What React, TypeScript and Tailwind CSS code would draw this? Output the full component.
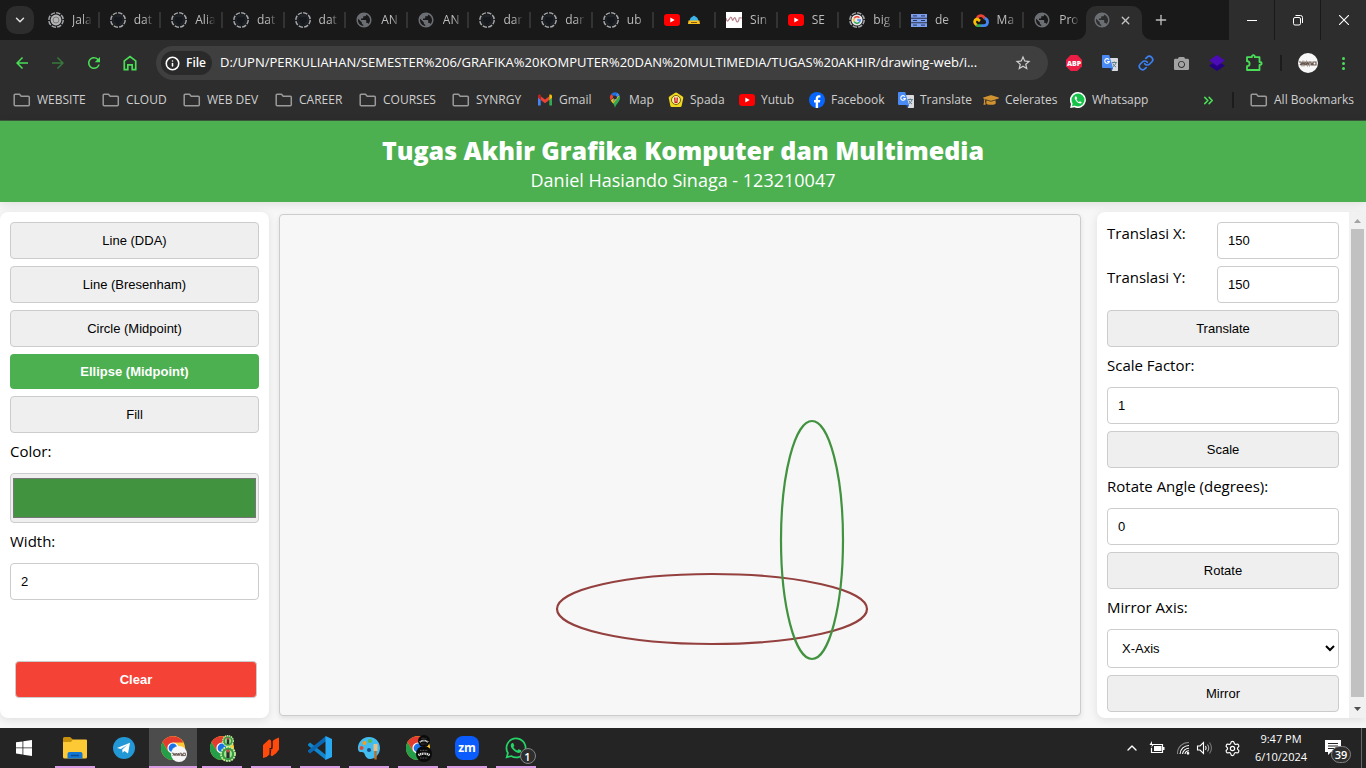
import React from "react";
import { MdArrowBack, MdArrowForward, MdRefresh, MdStarOutline, MdPublic } from "react-icons/md";
import { FaCamera, FaGraduationCap, FaWhatsapp } from "react-icons/fa";
import { ChevronDown, ChevronUp, ChevronsRight, Plus, X, Info, Settings, Link } from "lucide-react";

const fontUi = "font-['Open_Sans','Noto_Sans',sans-serif]";
const fontControl = "font-['Liberation_Sans',Arial,sans-serif]";

/* ---------- small drawings ---------- */

function DashedIcon({ children }: { children?: React.ReactNode }) {
  return (
    <svg viewBox="0 0 16 16" className="size-4 shrink-0">
      {children ?? (
        <>
          <circle cx="8" cy="8" r="5.8" fill="#1f2328" />
          <path d="M6.4 13v-2c-1.6-.5-2.6-1.4-2.6-3.2l.6-1.7.1-1.6 1.7.8h3.6l1.7-.8.1 1.6.6 1.7c0 1.8-1 2.7-2.6 3.2v2z" fill="#15181c" />
        </>
      )}
      <circle cx="8" cy="8" r="7.2" fill="none" stroke="#a4a7ab" strokeWidth="1.5" strokeDasharray="4.4 1.25" />
    </svg>
  );
}

function Globe() {
  return <MdPublic className="-ml-px size-[18px] shrink-0 text-[#6b6f74]" />;
}

function YouTube() {
  return (
    <svg viewBox="0 0 16 12" className="h-3 w-4 shrink-0">
      <rect width="16" height="12" rx="3" fill="#f00" />
      <path d="M6.3 3.4v5.2L10.7 6z" fill="#fff" />
    </svg>
  );
}

function GoogleG() {
  return (
    <>
      <circle cx="8" cy="8" r="5.6" fill="#e8e8e8" />
      <path d="M10.4 5.8A3.3 3.3 0 0 0 5.2 6.3" stroke="#ea4335" strokeWidth="1.5" fill="none" />
      <path d="M5.2 6.3a3.3 3.3 0 0 0 0 3.4" stroke="#fbbc05" strokeWidth="1.5" fill="none" />
      <path d="M5.2 9.7a3.3 3.3 0 0 0 5 .7" stroke="#34a853" strokeWidth="1.5" fill="none" />
      <path d="M10.2 10.4A3.3 3.3 0 0 0 11.2 8H8.2" stroke="#4285f4" strokeWidth="1.5" fill="none" />
    </>
  );
}

function Translate() {
  return (
    <svg viewBox="0 0 16 16" className="size-4 shrink-0">
      <path d="M6 3h9.2a.8.8 0 0 1 .8.8V15.2a.8.8 0 0 1-.8.8H10z" fill="#dadce0" />
      <path d="M9.8 7.5h5M12.3 6.5v1M14 7.6c-.5 2-1.7 3.2-3.2 4.2M10.8 8.6c.6 1.5 1.9 2.6 3.2 3.4" stroke="#607d8b" strokeWidth="1" fill="none" />
      <path d="M8 12.8h3L9.8 16z" fill="#1a56c4" />
      <path d="M.8 0H7.2L11 12.9H.8a.8.8 0 0 1-.8-.8V.8A.8.8 0 0 1 .8 0z" fill="#4a8af4" />
      <path d="M7 4.7A2.3 2.3 0 1 0 7.3 6.5H5.2" stroke="#fff" strokeWidth="1.1" fill="none" />
    </svg>
  );
}

function Gmail() {
  return (
    <svg viewBox="0 0 16 12" className="h-3 w-4 shrink-0">
      <path d="M1 2v9.500h2.700V5z" fill="#4285f4" />
      <path d="M15 2v9.500h-2.700V5z" fill="#34a853" />
      <path d="M3.7 2.2 8 5.5l4.3-3.3v3.7L8 9.2 3.7 5.9z" fill="#ea4335" />
      <path d="M1 2.1C1 .6 2.7-.1 3.7.8v5.1L1 3.8z" fill="#c5221f" />
      <path d="M15 2.1c0-1.500-1.700-2.200-2.700-1.300v5.1L15 3.8z" fill="#fbbc04" />
    </svg>
  );
}

function MapPin() {
  return (
    <svg viewBox="0 0 16 16" className="size-4 shrink-0">
      <path d="M4 8.600C5 10.800 7.300 11.600 8 16c.7-4.400 5-5.600 5-10.500 0-1-.3-1.900-.7-2.600z" fill="#34a853" />
      <path d="M3.700 8.200c.8 1.500 1.700 2.100 2.500 3.300L12.300 4 9 4z" fill="#fbbc04" />
      <path d="M4.300 2.100A5.200 5.200 0 0 0 3.700 8.300l3-3.600z" fill="#ea4335" />
      <path d="M8 .2c-1.500 0-2.800.7-3.700 1.900l3 2.500L10 .7C9.400.4 8.700.2 8 .2z" fill="#1a73e8" />
      <path d="M10 .7c1 .4 1.900 1.200 2.400 2.300L6 10.200l1-5z" fill="#4285f4" />
      <circle cx="8" cy="5.3" r="1.900" fill="#2d2d2d" />
    </svg>
  );
}

function Spada() {
  return (
    <svg viewBox="0 0 16 16" className="size-4 shrink-0">
      <path d="M8 2 13.800 5.800 12.200 13.500H3.800L2.200 5.800z" fill="#efd91c" stroke="#efd91c" strokeWidth="3" strokeLinejoin="round" />
      <circle cx="8" cy="8" r="4.500" fill="#fff3a0" stroke="#7b5b13" />
      <path d="M6 5.500h4L9.500 11h-3z" fill="#c51f1f" />
      <path d="M8 4.500v5" stroke="#fff" strokeWidth=".8" />
    </svg>
  );
}

function Facebook() {
  return (
    <svg viewBox="0 0 16 16" className="size-4 shrink-0">
      <circle cx="8" cy="8" r="8" fill="#0866ff" />
      <path d="M6.700 16v-5.500H5V8h1.700V6.900c0-2.500 1.200-3.700 3.300-3.700.5 0 1 .1 1.400.2v2.200h-1c-1 0-1.300.5-1.300 1.300V8h2.200l-.4 2.500H9.100V16z" fill="#fff" />
    </svg>
  );
}

function WhatsAppRound() {
  return (
    <svg viewBox="0 0 16 16" className="size-4 shrink-0">
      <path d="M8 0a8 8 0 1 1-3.600 15.200L.2 16l.8-4A8 8 0 0 1 8 0z" fill="#fff" />
      <circle cx="8" cy="8" r="6.500" fill="#16c24a" />
      <path d="M2 14.200 3 10l3 3.200z" fill="#16c24a" />
      <path d="M5.600 4.200c-1.600 1-1 3 .8 5s4.400 3.200 5.400 1.400L10 9.200l-1 .8C8 9.600 7 8.600 6.400 7.400l.8-1-.8-2z" fill="#fff" />
    </svg>
  );
}

function Folder() {
  return (
    <svg viewBox="0 0 18 14" className="h-3.5 w-[18px] shrink-0" fill="none" stroke="#9a9a9a" strokeWidth="1.5" strokeLinejoin="round">
      <path d="M2.200 1.200H6.500L8.200 3.200H15.300a1 1 0 0 1 1 1V11.700a1 1 0 0 1-1 1H2.200a1 1 0 0 1-1-1V2.200a1 1 0 0 1 1-1z" />
    </svg>
  );
}

function Servers() {
  return (
    <svg viewBox="0 0 16 13" className="h-[13px] w-4 shrink-0">
      {[0, 4.6, 9.2].map((y) => (
        <g key={y}>
          <rect y={y} width="16" height="3.8" fill="#7d9ff0" />
          <path d={`M2 ${y + 1.9}h4M10 ${y + 1.9}h4`} stroke="#26355f" strokeWidth="1" />
        </g>
      ))}
    </svg>
  );
}

function Cloud() {
  return (
    <svg viewBox="0 0 16 13" className="h-[13px] w-4 shrink-0" fill="none" strokeWidth="2.8">
      <path d="M4 4.800C5 1.300 9.500.2 11.800 4.500" stroke="#ea4335" />
      <path d="M11.600 4.300c4 .8 4 7.300-.6 7.300H8" stroke="#4285f4" />
      <path d="M8 11.600H4.300L3.300 11" stroke="#34a853" />
      <path d="M3.600 11C.8 9.500.9 5.500 4.500 5.200L7 7" stroke="#fbbc05" />
    </svg>
  );
}

function Signature() {
  return (
    <svg viewBox="0 0 16 16" className="size-4 shrink-0">
      <rect width="16" height="16" fill="#fff" />
      <path d="M0 6c1 5 2 3 4 0s2 4 3 2 2-4 3 0 3 1 3-1 1-1 3-1" stroke="#b9838d" strokeWidth="1.2" fill="none" />
    </svg>
  );
}

function Taxi() {
  return (
    <svg viewBox="0 0 12 10" className="h-2.5 w-3 shrink-0">
      <path d="M2.500 3 6 .5 9.500 3 10.500 6h-9z" fill="#3db4e7" />
      <path d="M.5 5.500h11l.5 3.500H0z" fill="#fcc21b" />
      <path d="M3 7.500h6" stroke="#8a5a13" />
    </svg>
  );
}

function Puzzle() {
  return (
    <svg viewBox="0 0 18 18" className="size-[18px] shrink-0" fill="none" stroke="#4ade57" strokeWidth="1.8" strokeLinejoin="round">
      <path d="M2 3.200H6.800Q6.800 1.200 8.300 1.200T9.800 3.200H14.500V8Q16.600 8 16.600 9.500T14.500 11V16H2V12.200Q4.600 12 4.600 9.700T2 7.200z" />
    </svg>
  );
}

function ChromeLogo({ className }: { className: string }) {
  return (
    <svg viewBox="0 0 24 24" className={className}>
      <circle cx="12" cy="12" r="12" fill="#fcc934" />
      <path d="M1.600 6 7 15 12 17.500 17 15 12 24A12 12 0 0 1 1.600 6z" fill="#259e4a" />
      <path d="M1.600 6A12 12 0 0 1 22.500 6.500H12L7 15z" fill="#e33b2e" />
      <circle cx="12" cy="12" r="5.600" fill="#fff" />
      <circle cx="12" cy="12" r="4.400" fill="#1a73e8" />
    </svg>
  );
}

function AvatarNando({ className }: { className: string }) {
  return (
    <svg viewBox="0 0 20 20" className={className}>
      <circle cx="10" cy="10" r="10" fill="#f7f7f7" />
      <path d="M1 9h2l1 3 1-3 1 3 1-3 2 3V9l2 3V9h2v3h2V9h3v3h-3M2 12l2-2m3 2 3-2m3 2 2-2" stroke="#67574f" strokeWidth="1.2" fill="none" />
    </svg>
  );
}

function AvatarGreen({ className }: { className: string }) {
  return (
    <svg viewBox="0 0 20 20" className={className}>
      <circle cx="10" cy="10" r="8.800" fill="#3a9b45" stroke="#c5ef9c" strokeWidth="2.2" strokeDasharray="2.5 1" />
      <circle cx="10" cy="10" r="5" fill="#9fe88f" />
      <path d="M8 6h4v9H8z" fill="#2b2f2b" />
      <circle cx="10" cy="6" r="2" fill="#d2414b" />
    </svg>
  );
}

function AvatarBlack({ className }: { className: string }) {
  return (
    <svg viewBox="0 0 20 20" className={className}>
      <circle cx="10" cy="10" r="10" fill="#0a0a0a" />
      <path d="M3 11.500q7-4 14 0" stroke="#e4e4e4" strokeWidth="3" strokeDasharray="1.5 .7" fill="none" />
      <path d="M5 15h10M5 5.500h10" stroke="#888" strokeWidth="1" strokeDasharray="1 1" />
    </svg>
  );
}

/* ---------- browser frame ---------- */

const tabs: { icon: React.ReactNode; text: React.ReactNode }[] = [
  {
    icon: (
      <DashedIcon>
        <circle cx="8" cy="8" r="5.4" fill="#b5b5b5" />
        <circle cx="8" cy="8" r="3" fill="none" stroke="#777" />
      </DashedIcon>
    ),
    text: "Jala",
  },
  { icon: <DashedIcon />, text: "dat" },
  { icon: <DashedIcon />, text: "Alia" },
  { icon: <DashedIcon />, text: "dat" },
  { icon: <DashedIcon />, text: "dat" },
  { icon: <Globe />, text: "AN" },
  { icon: <Globe />, text: "AN" },
  { icon: <DashedIcon />, text: "dar" },
  { icon: <DashedIcon />, text: "dar" },
  { icon: <DashedIcon />, text: "ub" },
  { icon: <YouTube />, text: <Taxi /> },
  { icon: <Signature />, text: "Sin" },
  { icon: <YouTube />, text: "SE" },
  { icon: <DashedIcon><GoogleG /></DashedIcon>, text: "big" },
  { icon: <Servers />, text: "de" },
  { icon: <Cloud />, text: "Ma" },
  { icon: <Globe />, text: "Pro" },
];

function TabStrip() {
  return (
    <div className="flex h-10 bg-[#191919]">
      <button aria-label="Search tabs" className="my-1.5 ml-1.5 flex size-7 shrink-0 items-center justify-center rounded-[10px] bg-[#2d2d2d] text-[#e0e0e0]">
        <ChevronDown size={14} strokeWidth={2.5} />
      </button>
      <div className="ml-1 flex min-w-0 flex-1">
        {tabs.map((tab, i) => (
          <div key={i} className="flex min-w-0 flex-1 items-center">
            <div className="flex min-w-0 flex-1 items-center gap-2 pl-2.5">
              {tab.icon}
              <span className="flex h-[18px] w-6 items-center whitespace-nowrap text-[12px] leading-[18px] text-[#bdbdbd] [mask-image:linear-gradient(to_right,black_45%,transparent_85%)]">
                {tab.text}
              </span>
            </div>
            {i < tabs.length - 1 && <span className="h-4 w-0.5 shrink-0 bg-[#333333]" />}
          </div>
        ))}
      </div>
      <div className="relative mt-1.5 flex w-14 shrink-0 items-center justify-between rounded-t-[10px] bg-[#2d2d2d] pr-2.5 pb-1.5 pl-2">
        <svg viewBox="0 0 10 10" className="absolute bottom-0 -left-2.5 size-2.5"><path d="M10 0A10 10 0 0 1 0 10H10z" fill="#2d2d2d" /></svg>
        <svg viewBox="0 0 10 10" className="absolute -right-2.5 bottom-0 size-2.5"><path d="M0 0A10 10 0 0 0 10 10H0z" fill="#2d2d2d" /></svg>
        <Globe />
        <button aria-label="Close tab"><X size={13} strokeWidth={2.5} className="text-[#c4c4c4]" /></button>
      </div>
      <div className="flex w-[87px] shrink-0 items-center pl-[11px]">
        <button aria-label="New tab"><Plus size={16} strokeWidth={2} className="text-[#bdbdbd]" /></button>
      </div>
      <div className="flex shrink-0 gap-px text-white">
        <button aria-label="Minimize" className="flex w-[45px] items-center justify-center bg-[#2d2d2d]"><svg viewBox="0 0 10 10" className="size-2.5"><path d="M0 5.500h10" stroke="#fff" /></svg></button>
        <button aria-label="Restore" className="flex w-[45px] items-center justify-center bg-[#2d2d2d]">
          <svg viewBox="0 0 12 12" className="size-3" fill="none" stroke="#fff"><rect x="1.5" y="3.5" width="7" height="7.500" rx="1.500" /><path d="M3.500 1.500h5a2 2 0 0 1 2 2v5.500" /></svg>
        </button>
        <button aria-label="Close" className="flex w-[45px] items-center justify-center bg-[#2d2d2d]"><svg viewBox="0 0 10 10" className="size-2.5"><path d="M0 0 10 10M10 0 0 10" stroke="#fff" strokeWidth="1.1" /></svg></button>
      </div>
    </div>
  );
}

function Toolbar() {
  return (
    <div className="flex h-[46px] items-center bg-[#2d2d2d]">
      <div className="flex w-[156px] shrink-0 items-center gap-[18px] pl-[13px] text-[#4ade57]">
        <button aria-label="Back"><MdArrowBack size={18} /></button>
        <button aria-label="Forward" className="text-[#37773b]"><MdArrowForward size={18} /></button>
        <button aria-label="Reload"><MdRefresh size={18} /></button>
        <button aria-label="Home">
          <svg viewBox="0 0 18 18" className="size-[18px]" fill="none" stroke="currentColor" strokeWidth="1.7"><path d="M3.300 15.700V6.900L9 2.600l5.700 4.300v8.800h-3.500v-4.900H6.800v4.900z" /></svg>
        </button>
      </div>
      <div className="flex h-[34px] min-w-0 flex-1 items-center rounded-full bg-[#3f3f3f] pr-4 pl-[5px]">
        <div className="flex h-6 w-[51px] shrink-0 items-center gap-1.5 rounded-full bg-[#2a2a2a] pl-1 text-[12px] font-semibold text-white">
          <Info size={15} strokeWidth={2.5} className="shrink-0" />
          File
        </div>
        <input
          aria-label="Address"
          readOnly
          className="ml-2 min-w-0 flex-1 bg-transparent text-[13px] text-white outline-none"
          value="D:/UPN/PERKULIAHAN/SEMESTER%206/GRAFIKA%20KOMPUTER%20DAN%20MULTIMEDIA/TUGAS%20AKHIR/drawing-web/i..."
        />
        <button aria-label="Bookmark this page"><MdStarOutline size={18} className="text-[#cfcfcf]" /></button>
      </div>
      <div className="flex w-[216px] shrink-0 items-center gap-5 pl-[18px]">
        <svg viewBox="0 0 16 16" className="size-4 shrink-0">
          <path d="M4.700 0h6.600L16 4.700v6.600L11.300 16H4.700L0 11.300V4.700z" fill="#ed1e45" />
          <text x="8" y="10.6" textAnchor="middle" fontSize="7" fontWeight="800" fill="#fff">ABP</text>
        </svg>
        <Translate />
        <Link size={16} strokeWidth={2.5} className="shrink-0 text-[#3b82f6]" />
        <FaCamera size={15} className="shrink-0 text-[#a3a3a3]" />
        <svg viewBox="0 0 16 16" className="size-4 shrink-0"><path d="M0 10.500 8 6l8 4.500L8 16z" fill="#250080" /><path d="M0 5.500 8 0l8 5.500L8 11z" fill="#4b0bb5" /></svg>
        <Puzzle />
      </div>
      <div className="flex w-[102px] shrink-0 items-center pl-4">
        <span className="h-4 w-0.5 bg-[#1c1c1c]" />
        <AvatarNando className="ml-4 size-5" />
        <button aria-label="Menu" className="ml-6 flex flex-col gap-0.5">
          <span className="size-[3px] rounded-full bg-[#4ade57]" /><span className="size-[3px] rounded-full bg-[#4ade57]" /><span className="size-[3px] rounded-full bg-[#4ade57]" />
        </button>
      </div>
    </div>
  );
}

const bookmarks: { icon: React.ReactNode; text: string; width: string }[] = [
  { icon: <Folder />, text: "WEBSITE", width: "w-[89px]" },
  { icon: <Folder />, text: "CLOUD", width: "w-[81px]" },
  { icon: <Folder />, text: "WEB DEV", width: "w-[92px]" },
  { icon: <Folder />, text: "CAREER", width: "w-[84px]" },
  { icon: <Folder />, text: "COURSES", width: "w-[93px]" },
  { icon: <Folder />, text: "SYNRGY", width: "w-[85px]" },
  { icon: <Gmail />, text: "Gmail", width: "w-[70px]" },
  { icon: <MapPin />, text: "Map", width: "w-[61px]" },
  { icon: <Spada />, text: "Spada", width: "w-[71px]" },
  { icon: <YouTube />, text: "Yutub", width: "w-[70px]" },
  { icon: <Facebook />, text: "Facebook", width: "w-[89px]" },
  { icon: <Translate />, text: "Translate", width: "w-[85px]" },
  { icon: <FaGraduationCap size={16} className="shrink-0 text-[#d1932f]" />, text: "Celerates", width: "w-[87px]" },
  { icon: <WhatsAppRound />, text: "Whatsapp", width: "w-[88px]" },
];

function BookmarkBar() {
  return (
    <div className="flex h-[35px] items-center border-b border-[#3c5a3d] bg-[#2d2d2d] pb-1.5 pl-[13px] text-[12px] leading-4 text-[#cfcfcf]">
      {bookmarks.map((b) => (
        <a key={b.text} href="#" className={`flex shrink-0 items-center gap-1.5 whitespace-nowrap ${b.width}`}>
          {b.icon}
          {b.text}
        </a>
      ))}
      <div className="ml-auto flex items-center pr-3">
        <ChevronsRight size={15} strokeWidth={2.5} className="text-[#4ade57]" />
        <span className="ml-4 h-4 w-0.5 bg-[#1c1c1c]" />
        <a href="#" className="ml-4 flex items-center gap-1.5 whitespace-nowrap"><Folder />All Bookmarks</a>
      </div>
    </div>
  );
}

/* ---------- page ---------- */

const field = `w-full rounded-[4px] border border-[#cccccc] text-[13px] text-black ${fontControl}`;
const button = `${field} h-[37px] bg-[#efefef]`;
const input = `${field} h-[37px] bg-white px-2.5`;
const label = "block h-[26px] text-[15px] leading-[22px] text-black";

function ToolPanel() {
  return (
    <section className="flex w-[269px] shrink-0 flex-col gap-[7px] rounded-lg bg-white p-2.5 shadow-[0_2px_10px_rgba(0,0,0,0.1)]">
      <button className={button}>Line (DDA)</button>
      <button className={button}>Line (Bresenham)</button>
      <button className={button}>Circle (Midpoint)</button>
      <button className={`h-[35px] w-full rounded-[4px] bg-[#4caf50] text-[13px] font-bold text-white ${fontControl}`}>Ellipse (Midpoint)</button>
      <button className={button}>Fill</button>
      <label htmlFor="color" className={label}>Color:</label>
      <input id="color" type="color" defaultValue="#41933f" className="h-[50px] w-full rounded-[4px] border border-[#cccccc] bg-[#efefef] p-0" />
      <label htmlFor="width" className={label}>Width:</label>
      <input id="width" type="number" defaultValue={2} className={input} />
      <div className="mt-auto pr-0.5 pb-2.5 pl-[5px]">
        <button className={`h-[37px] w-full rounded-[4px] border border-[#cccccc] bg-[#f44336] text-[13px] font-bold text-white ${fontControl}`}>Clear</button>
      </div>
    </section>
  );
}

function DrawingArea() {
  return (
    <section className="my-0.5 mr-4 ml-2.5 flex min-w-0 flex-1 rounded-[4px] border border-[#cccccc] bg-[#f7f7f7] shadow-[0_2px_5px_rgba(0,0,0,0.1)]">
      <svg viewBox="0 0 800 500" className="w-full" role="img" aria-label="Drawing" fill="none" strokeWidth="2.2">
        <ellipse cx="432" cy="394" rx="155" ry="35" stroke="#93403f" />
        <ellipse cx="532" cy="325" rx="31" ry="119" stroke="#41933f" />
      </svg>
    </section>
  );
}

function TransformPanel() {
  return (
    <section className="flex w-[269px] shrink-0 overflow-hidden rounded-l-lg bg-white shadow-[0_2px_10px_rgba(0,0,0,0.1)]">
      <div className="flex min-w-0 flex-1 flex-col gap-[7px] p-2.5 pb-1.5">
        <div className="flex justify-between">
          <label htmlFor="tx" className={label}>Translasi X:</label>
          <div className="w-[122px]"><input id="tx" type="number" defaultValue={150} className={input} /></div>
        </div>
        <div className="flex justify-between">
          <label htmlFor="ty" className={label}>Translasi Y:</label>
          <div className="w-[122px]"><input id="ty" type="number" defaultValue={150} className={input} /></div>
        </div>
        <button className={button}>Translate</button>
        <label htmlFor="scale" className={label}>Scale Factor:</label>
        <input id="scale" type="number" defaultValue={1} className={input} />
        <button className={button}>Scale</button>
        <label htmlFor="angle" className={label}>Rotate Angle (degrees):</label>
        <input id="angle" type="number" defaultValue={0} className={input} />
        <button className={button}>Rotate</button>
        <label htmlFor="axis" className={label}>Mirror Axis:</label>
        <select id="axis" className={`${field} h-[39px] bg-white px-2.5`}>
          <option>X-Axis</option>
          <option>Y-Axis</option>
        </select>
        <button className={button}>Mirror</button>
      </div>
      <div aria-hidden="true" className="flex w-[17px] flex-col items-center bg-[#f1f1f1]">
        <svg viewBox="0 0 17 17" className="size-[17px] shrink-0"><path d="M5 11h7L8.500 7z" fill="#a3a3a3" /></svg>
        <div className="w-[13px] flex-1 bg-[#c1c1c1]" />
        <svg viewBox="0 0 17 21" className="h-[21px] w-[17px] shrink-0"><path d="M5 10h7l-3.500 4z" fill="#505050" /></svg>
      </div>
    </section>
  );
}

/* ---------- taskbar ---------- */

const apps: { name: string; icon: React.ReactNode; open?: boolean; active?: boolean }[] = [
  {
    name: "File Explorer",
    open: true,
    icon: (
      <svg viewBox="0 0 24 22" className="h-[22px] w-6">
        <path d="M0 1.500Q0 0 1.500 0H7l3 2.500V6H0z" fill="#c9920c" />
        <path d="M0 5h8l2-2.500h13q1 0 1 1V20q0 1.500-1.500 1.500h-21Q0 21.500 0 20z" fill="#fdc935" />
        <path d="M4.500 21.500V17q0-2 2-2h11q2 0 2 2v4.500z" fill="#1377d1" />
        <path d="M8 18.500h8" stroke="#0b4b92" strokeWidth="1.5" />
      </svg>
    ),
  },
  {
    name: "Telegram",
    icon: (
      <svg viewBox="0 0 22 22" className="size-[22px]">
        <circle cx="11" cy="11" r="11" fill="#2398d6" />
        <path d="M4 11 17 5.700 15 16.500l-3.600-2.600-1.800 1.800-.4-3.200 5-4.600-6.300 4z" fill="#fff" />
      </svg>
    ),
  },
  { name: "Chrome profile 1", open: true, active: true, icon: <span className="relative flex size-6"><ChromeLogo className="size-6" /><AvatarNando className="absolute top-2.5 left-2.5 size-4" /></span> },
  { name: "Chrome profile 2", open: true, icon: <span className="relative flex size-6"><ChromeLogo className="size-6" /><AvatarGreen className="absolute -top-px left-3 size-3" /><AvatarGreen className="absolute top-2.5 left-2.5 size-4" /></span> },
  {
    name: "Nitro",
    open: true,
    icon: (
      <svg viewBox="0 0 18 24" className="h-6 w-[18px]">
        <path d="M1 9 7 3.500Q9.500 3 9.500 7V12H7.500v6.500Q5 21.500 1 22z" fill="#ff4a0c" />
        <path d="M17 1.500v12Q14.500 18 10.500 20 8 20.500 8 17v-4h2.500V5Q13 2.500 17 1.500z" fill="#ff4a0c" />
        <path d="M10 4v7L8.800 13.500 8 19.500" stroke="#2a1a14" strokeWidth="1" fill="none" />
      </svg>
    ),
  },
  {
    name: "Visual Studio Code",
    open: true,
    icon: (
      <svg viewBox="0 0 24 24" className="size-6">
        <path d="M0 8.200 2 6.500 18 19v5L0 9.500z" fill="#1186cf" />
        <path d="M0 15.800 2 17.500 18 5V0L0 14.500z" fill="#0b68b4" />
        <path d="M17.500 0 24 3v18l-6.500 3z" fill="#29a9f2" />
      </svg>
    ),
  },
  {
    name: "Paint",
    open: true,
    icon: (
      <svg viewBox="0 0 24 24" className="size-6">
        <path d="M12 1C4 1 .5 8 1 13c.4 4 4 3 5.500 3.500S8 23 13 23s10-4.500 10-11S18 1 12 1z" fill="#43bdf0" />
        <circle cx="4.500" cy="12" r="2" fill="#dd4931" /><circle cx="7.500" cy="7" r="2" fill="#f4a11b" /><circle cx="13" cy="5" r="2" fill="#55b94e" /><circle cx="12" cy="14" r="2" fill="#1a4c83" />
        <path d="M16.500 8h4v7h-4z" fill="#e8c087" /><path d="M17.300 15h2.400v8.500h-2.400z" fill="#b66e2a" />
      </svg>
    ),
  },
  { name: "Chrome profile 3", open: true, icon: <span className="relative flex size-6"><ChromeLogo className="size-6" /><AvatarBlack className="absolute -top-px left-3 size-3" /><AvatarBlack className="absolute top-2.5 left-2.5 size-4" /></span> },
  {
    name: "Zoom",
    open: true,
    icon: (
      <svg viewBox="0 0 24 24" className="size-6">
        <rect width="24" height="24" rx="8" fill="#0b5cff" />
        <text x="12" y="15.500" textAnchor="middle" fontSize="12" fontWeight="700" fill="#fff">zm</text>
      </svg>
    ),
  },
  {
    name: "WhatsApp",
    open: true,
    icon: (
      <span className="relative flex size-6">
        <FaWhatsapp className="size-6 text-[#25d366]" />
        <span className="absolute top-3 left-4 flex size-4 items-center justify-center rounded-full border border-[#858585] bg-[#2e2e2e] text-[11px] leading-none font-semibold text-white">1</span>
      </span>
    ),
  },
];

function Taskbar() {
  return (
    <footer className="flex h-10 bg-[#242424] text-white">
      <button aria-label="Start" className="mr-0.5 flex w-12 items-center justify-center">
        <svg viewBox="0 0 16 16" className="size-4" fill="#fff"><path d="M0 2.300 6.500 1.400v6.100H0zM7.300 1.300 16 0v7.500H7.300zM0 8.300h6.500v6.200L0 13.600zM7.300 8.300H16V16l-8.700-1.300z" /></svg>
      </button>
      {apps.map((app) => (
        <button key={app.name} aria-label={app.name} className="flex w-[49px] flex-col items-center">
          <span className={`flex h-[38px] items-center justify-center pt-0.5 ${app.active ? "w-12 bg-[#4c4c4c]" : "w-10"}`}>{app.icon}</span>
          {app.open && <span className={`h-0.5 bg-[#d99be4] ${app.active ? "w-12" : "w-10"}`} />}
        </button>
      ))}
      <div className="ml-auto flex items-center">
        <ChevronUp size={16} className="text-white" />
        <svg viewBox="0 0 18 16" className="ml-2 h-4 w-[18px]">
          <path d="M4 4.500h10.500v8H3.500V8" fill="none" stroke="#fff" strokeWidth="1.2" />
          <path d="M6 6h7.500v5H6z" fill="#fff" /><path d="M15 7h1.500v3H15z" fill="#fff" /><path d="M4 1 1.500 5H4L3 8l3-4H4z" fill="#fff" />
        </svg>
        <svg viewBox="0 0 14 14" className="ml-2.5 size-3.5" fill="none" stroke="#fff" strokeWidth="1.1">
          <path d="M1.500 13A11 11 0 0 1 13 1.500" stroke="#8a8a8a" /><path d="M4 13A9 9 0 0 1 13 4.500" /><path d="M6.500 13A6.500 6.500 0 0 1 13 7.300" /><path d="M9 13a4 4 0 0 1 4-3.300" /><circle cx="12" cy="12.300" r=".8" fill="#fff" />
        </svg>
        <svg viewBox="0 0 18 16" className="ml-1.5 h-4 w-[18px]" fill="none" stroke="#fff" strokeWidth="1.1">
          <path d="M1.500 6H4l3.500-3.500v11L4 10H1.500z" /><path d="M9.500 6q1.300 2 0 4" /><path d="M11.500 4.500q2.500 3.500 0 7" stroke="#aaa" /><path d="M13.500 2.500q4 5.500 0 11" stroke="#777" />
        </svg>
        <Settings size={17} strokeWidth={1.7} className="ml-2.5" />
        <div className="ml-1 flex w-[72px] flex-col items-center text-[11px] leading-[18px] whitespace-nowrap">
          <span>9:47 PM</span>
          <span>6/10/2024</span>
        </div>
        <div className="relative ml-2 h-10 w-9">
          <svg viewBox="0 0 16 16" className="mt-3 size-4"><path d="M0 0h16v12H6l-3 3v-3H0z" fill="#fff" /><path d="M3 3.500h10M3 6h10M3 8.500h6" stroke="#242424" /></svg>
          <span className="absolute top-[18px] left-1.5 flex h-[17px] w-5 items-center justify-center rounded-full border border-[#858585] bg-[#2e2e2e] text-[11px] leading-none font-semibold">39</span>
        </div>
        <span className="mr-1 h-10 w-px bg-[#666666]" />
      </div>
    </footer>
  );
}

export default function App() {
  return (
    <div className={`flex min-h-screen flex-col bg-[#f7f7f7] ${fontUi}`}>
      <div>
        <TabStrip />
        <Toolbar />
        <BookmarkBar />
      </div>
      <header className="flex h-[81px] flex-col items-center bg-[#4caf50] pt-3 text-white shadow-[0_2px_10px_rgba(0,0,0,0.1)]">
        <h1 className="text-[25px] leading-[34px] font-extrabold">Tugas Akhir Grafika Komputer dan Multimedia</h1>
        <p className="text-[18px] leading-[26px]">Daniel Hasiando Sinaga - 123210047</p>
      </header>
      <main className="flex flex-1 overflow-hidden py-2.5">
        <ToolPanel />
        <DrawingArea />
        <TransformPanel />
      </main>
      <Taskbar />
    </div>
  );
}
